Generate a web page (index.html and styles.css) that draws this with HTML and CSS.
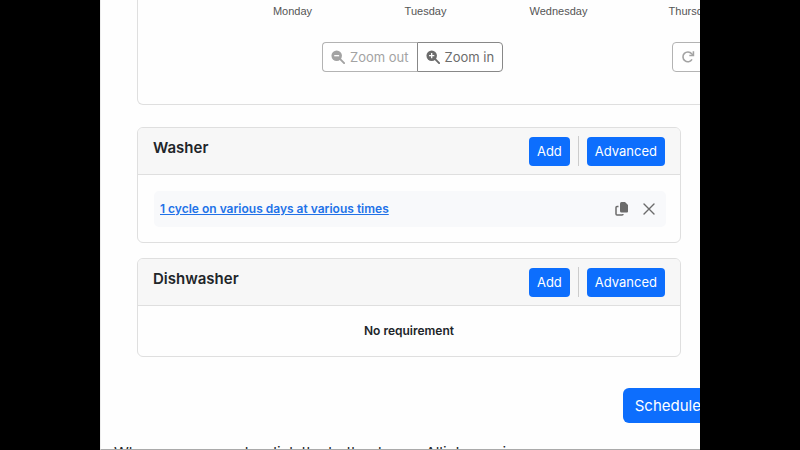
FILE: index.html
```html
<!DOCTYPE html>
<html lang="en">
<head>
<meta charset="utf-8">
<title>Schedule</title>
<link rel="stylesheet" href="styles.css">
</head>
<body>
<main class="screen">
  <section class="card chart">
    <div class="days"><span>Monday</span><span>Tuesday</span><span>Wednesday</span><span>Thursday</span></div>
    <div class="toolbar">
      <div class="group">
        <button class="tool" disabled><svg class="icon" viewBox="0 0 16 16" aria-hidden="true"><circle cx="6.5" cy="6.5" r="6" fill="currentColor"/><path d="M10.5 10.5 15 15" stroke="currentColor" stroke-width="2.2" stroke-linecap="round"/><path d="M3.7 6.5h5.6" stroke="#fff" stroke-width="1.5"/></svg>Zoom out</button>
        <button class="tool"><svg class="icon" viewBox="0 0 16 16" aria-hidden="true"><circle cx="6.5" cy="6.5" r="6" fill="currentColor"/><path d="M10.5 10.5 15 15" stroke="currentColor" stroke-width="2.2" stroke-linecap="round"/><path d="M3.5 6.5h6M6.5 3.5v6" stroke="#fff" stroke-width="1.5"/></svg>Zoom in</button>
      </div>
      <button class="tool reset" disabled><svg class="icon" viewBox="0 0 16 16" aria-hidden="true"><path d="M12.6 10.8A5.6 5.6 0 1 1 12.2 4.300L14 6" fill="none" stroke="currentColor" stroke-width="1.8"/><path d="M14.2 1.5v4.700H9.5" fill="none" stroke="currentColor" stroke-width="1.8"/></svg>Reset</button>
    </div>
  </section>

  <section class="card">
    <header class="head">
      <h2>Washer</h2>
      <div class="actions"><button class="primary">Add</button><span class="rule"></span><button class="primary">Advanced</button></div>
    </header>
    <div class="body">
      <div class="item">
        <a href="#washer">1 cycle on various days at various times</a>
        <button class="plain" aria-label="Copy"><svg class="icon" viewBox="0 0 14 14" aria-hidden="true"><path d="M6.5 0H10l3 3v6.5a1 1 0 0 1-1 1H6.5a1.500 1.500 0 0 1-1.500-1.500v-7.500A1.500 1.500 0 0 1 6.500 0z" fill="currentColor"/><path d="M3.5 4.500H2a1 1 0 0 0-1 1v6.500a1 1 0 0 0 1 1h5a1 1 0 0 0 1-1" fill="none" stroke="currentColor" stroke-width="1.5"/></svg></button>
        <button class="plain" aria-label="Remove"><svg class="icon" viewBox="0 0 14 14" aria-hidden="true"><path d="M2 2l10 10M12 2L2 12" stroke="currentColor" stroke-width="1.4" stroke-linecap="round"/></svg></button>
      </div>
    </div>
  </section>

  <section class="card">
    <header class="head">
      <h2>Dishwasher</h2>
      <div class="actions"><button class="primary">Add</button><span class="rule"></span><button class="primary">Advanced</button></div>
    </header>
    <p class="empty">No requirement</p>
  </section>

  <div class="submit"><button class="primary large">Schedule</button></div>
  <p class="note">When you are ready, click the button to see Allie's magic.</p>
</main>
</body>
</html>
```
FILE: styles.css
```css
* { box-sizing: border-box; }
body {
  margin: 0;
  background: #000;
  color: #212529;
  font-family: Inter, "Liberation Sans", sans-serif;
}
.screen {
  height: 100vh;
  margin: 0 12.5%;
  padding: 0 19px 0 36px;
  overflow: hidden;
  background: #fefefe;
  border-left: 1px solid #eee;
  border-bottom: 1px solid #aaa;
}
h2, p { margin: 0; }
button { font: inherit; white-space: nowrap; }
.icon { width: 14px; height: 14px; flex: none; }
.card {
  margin-bottom: 15px;
  border: 1px solid #dfdfdf;
  border-radius: 6px;
}
.chart {
  width: 700px;
  margin-bottom: 22px;
  padding: 4px 0 32px;
  border-top: 0;
  border-radius: 0 0 6px 6px;
}
.days {
  display: grid;
  grid-template-columns: repeat(4, 133px);
  margin-left: 88px;
  color: #555;
  font: 11px/14px "Liberation Sans", sans-serif;
  text-align: center;
}
.toolbar {
  display: flex;
  gap: 169px;
  margin: 24px 0 0 184px;
}
.group { display: flex; }
.tool {
  display: flex;
  align-items: center;
  gap: 5px;
  height: 30px;
  padding: 0 8px;
  border: 1px solid #888;
  border-radius: 4px;
  background: #fff;
  color: #6c6c6c;
  font-size: 13px;
}
.tool:disabled { color: #a3a3a3; border-color: #b3b3b3; }
.group .tool:first-child { border-right: 0; border-radius: 4px 0 0 4px; }
.group .tool:last-child { border-radius: 0 4px 4px 0; }
.head {
  display: flex;
  justify-content: space-between;
  padding: 8px 15px;
  border-bottom: 1px solid #dfdfdf;
  border-radius: 5px 5px 0 0;
  background: #f7f7f7;
}
h2 {
  padding-top: 2px;
  font-size: 15px;
  line-height: 20px;
  font-weight: 600;
}
.actions { display: flex; align-items: center; gap: 8px; }
.rule { width: 1px; height: 30px; background: #ccc; }
.primary {
  height: 29px;
  padding: 0 8px;
  border: 0;
  border-radius: 4px;
  background: #0d6efd;
  color: #fff;
  font-size: 13px;
}
.body { padding: 16px 14px 15px 16px; }
.item {
  display: flex;
  align-items: center;
  gap: 13px;
  height: 36px;
  padding: 0 10px 0 6px;
  border-radius: 5px;
  background: #f8f9fb;
}
.item a {
  flex: 1;
  color: #2272e8;
  font-size: 12px;
  line-height: 16px;
  font-weight: 600;
}
.plain {
  display: flex;
  padding: 0;
  border: 0;
  background: none;
  color: #6b6b6b;
}
.empty {
  padding: 15px;
  font-size: 12px;
  line-height: 20px;
  font-weight: 600;
  text-align: center;
}
.submit { display: flex; margin: 31px -32px 0 0; justify-content: flex-end; }
.large {
  height: 35px;
  padding: 0 12px;
  border-radius: 6px;
  font-size: 15px;
}
.note {
  margin: 20px 0 0 -23px;
  font-size: 15px;
  line-height: 20px;
  white-space: nowrap;
}
```
